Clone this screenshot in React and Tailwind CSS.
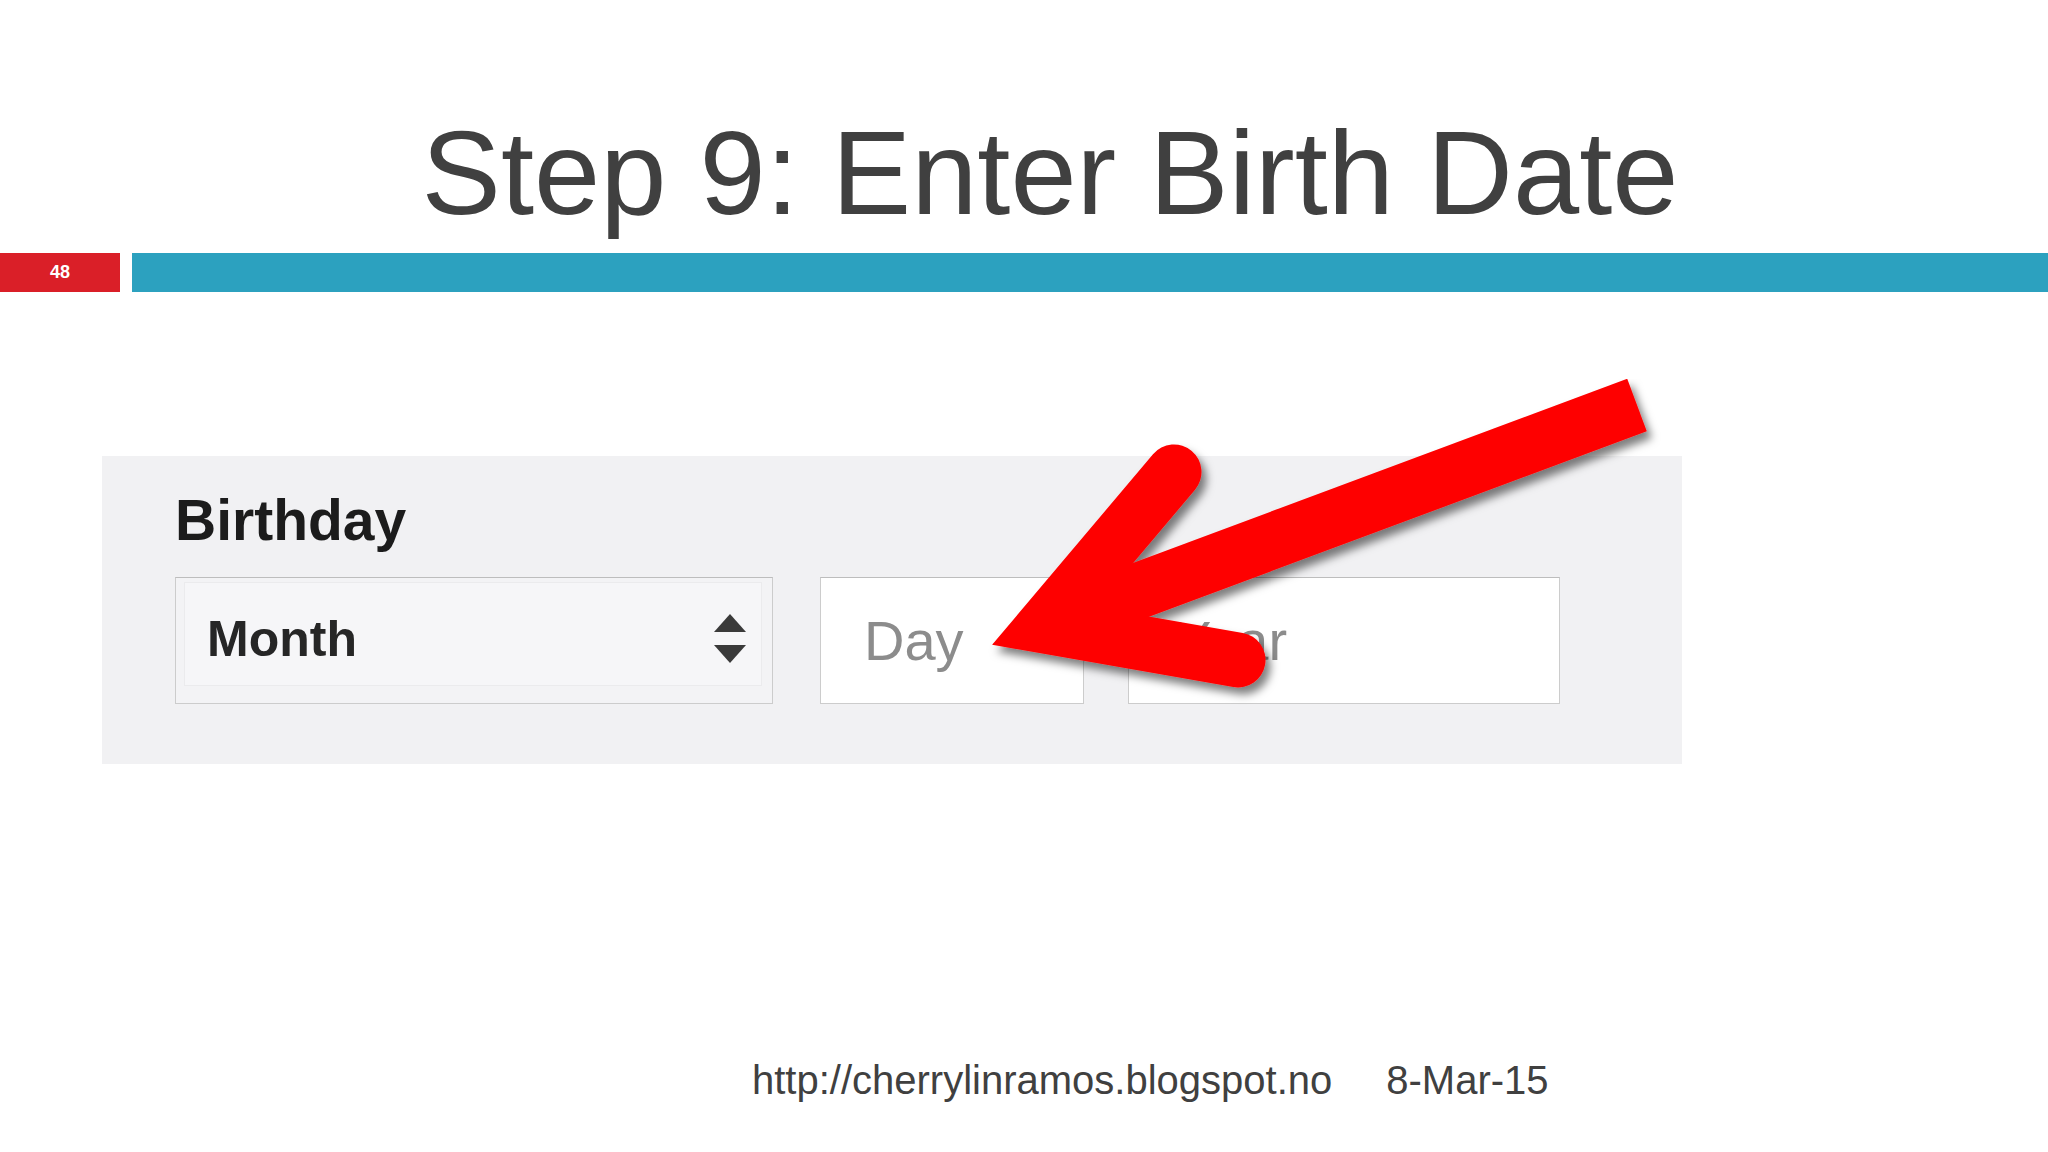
import React from 'react'

function SelectArrows() {
  return (
    <svg width="34" height="50" viewBox="0 0 34 50" className="shrink-0">
      <path d="M17 0 L33 18 L1 18 Z" fill="#3a3a3a" />
      <path d="M1 31 L33 31 L17 49 Z" fill="#3a3a3a" />
    </svg>
  )
}

function RedArrow() {
  return (
    <svg className="absolute inset-0 pointer-events-none" width="2048" height="1152" viewBox="0 0 2048 1152">
      <defs>
        <filter id="arrowShadow" x="-10%" y="-10%" width="130%" height="130%">
          <feDropShadow dx="5" dy="7" stdDeviation="4" floodColor="#000" floodOpacity="0.5" />
        </filter>
      </defs>
      <g filter="url(#arrowShadow)" stroke="#fe0000" fill="none">
        <line x1="1637" y1="405" x2="1044" y2="626" strokeWidth="56" strokeLinecap="butt" />
        <polyline points="1174,472 1044,626 1238,660" strokeWidth="55" strokeLinejoin="miter" strokeLinecap="round" />
      </g>
    </svg>
  )
}

export default function App() {
  return (
    <div className="relative w-[2048px] h-[1152px] overflow-hidden bg-white" style={{ fontFamily: '"Liberation Sans", Arial, sans-serif' }}>
      {/* title */}
      <h1 className="mt-[113px] h-[120px] pl-[52px] text-center text-[119px] leading-[120px] font-normal text-[#404040]">
        Step 9: Enter Birth Date
      </h1>

      {/* slide number + rule */}
      <div className="mt-[20px] flex h-[39px] gap-[12px]">
        <div className="flex w-[120px] items-center justify-center bg-[#da1f28] text-[18px] font-bold text-white">48</div>
        <div className="flex-1 bg-[#2ca1bf]" />
      </div>

      {/* screenshot of the form */}
      <div className="ml-[102px] mt-[164px] h-[308px] w-[1580px] bg-[#f1f1f3] pl-[73px] pt-[36px] blur-[0.5px]">
        <div className="h-[57px] text-[57px] leading-[57px] font-bold text-[#1c1c1c]">Birthday</div>
        <div className="mt-[28px] flex h-[127px]">
          <div className="w-[598px] border border-[#cccccc] border-t-[#bdbdbd] bg-[#f3f3f5] pt-[4px] pr-[10px] pb-[17px] pl-[8px]">
            <div className="flex h-full items-center justify-between border border-[#ebebed] bg-[#f6f6f8] pt-[10px] pl-[22px] pr-[14px]">
              <span className="text-[50px] font-bold text-[#262626]">Month</span>
              <SelectArrows />
            </div>
          </div>
          <div className="ml-[47px] flex w-[264px] items-center border border-[#cccccc] border-t-[#bdbdbd] bg-white pl-[43px]">
            <span className="text-[56px] text-[#8c8c8c]">Day</span>
          </div>
          <div className="ml-[44px] flex w-[432px] items-center border border-[#cccccc] border-t-[#bdbdbd] bg-white pl-[45px]">
            <span className="text-[56px] text-[#8c8c8c]">Year</span>
          </div>
        </div>
      </div>

      {/* footer */}
      <div className="mt-[296px] flex gap-[54px] pl-[752px] text-[40px] leading-[40px] text-[#404040]">
        <span>http://cherrylinramos.blogspot.no</span>
        <span>8-Mar-15</span>
      </div>

      <RedArrow />
    </div>
  )
}
